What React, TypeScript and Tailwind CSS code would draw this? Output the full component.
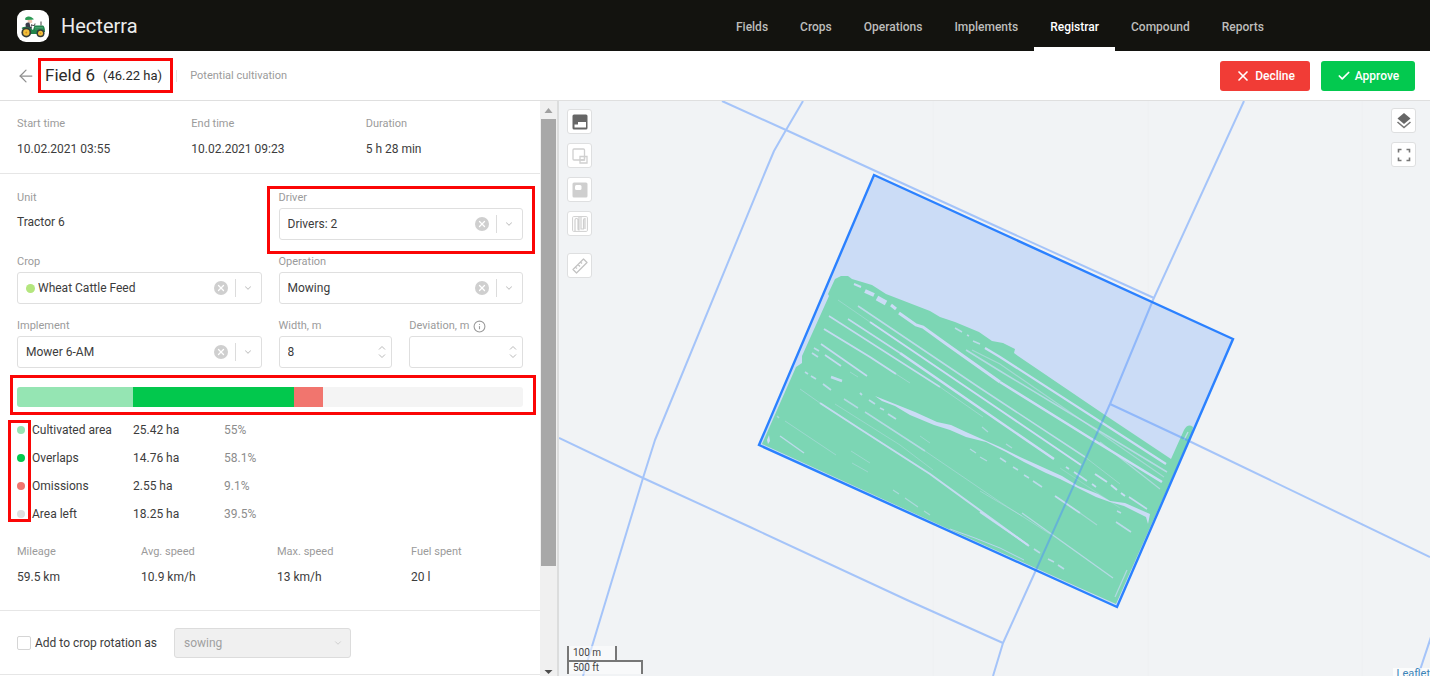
import React from 'react';
import { ArrowLeft, Check, ChevronDown, Info, X } from 'lucide-react';
import clsx from 'clsx';

const navItems = ['Fields', 'Crops', 'Operations', 'Implements', 'Registrar', 'Compound', 'Reports'];

const times = [
  { label: 'Start time', value: '10.02.2021 03:55' },
  { label: 'End time', value: '10.02.2021 09:23' },
  { label: 'Duration', value: '5 h 28 min' },
];

const areas = [
  { label: 'Cultivated area', value: '25.42 ha', percent: '55%', dot: 'bg-[#95e5b3]', bar: 23 },
  { label: 'Overlaps', value: '14.76 ha', percent: '58.1%', dot: 'bg-[#02c84d]', bar: 31.8 },
  { label: 'Omissions', value: '2.55 ha', percent: '9.1%', dot: 'bg-[#f1756e]', bar: 5.7 },
  { label: 'Area left', value: '18.25 ha', percent: '39.5%', dot: 'bg-[#dedede]', bar: 0 },
];

const stats = [
  { label: 'Mileage', value: '59.5 km' },
  { label: 'Avg. speed', value: '10.9 km/h' },
  { label: 'Max. speed', value: '13 km/h' },
  { label: 'Fuel spent', value: '20 l' },
];

// Neighbouring field borders, in map canvas units
const borders = [
  'M722 101 L786 130 L1000 228 L1154 298',
  'M803 101 L786 130 L774 151 L766 170 L655 440 L643 478 L583 676',
  'M1244 101 L1153 300 L1110 404 L1036 570 L1003 643 L993 676',
  'M1110 404 L1189 441 L1430 557',
  'M559 438 L643 478 L750 527 L907 600 L1003 643',
  'M1432 634 L1418 676',
];

// Strips the mower has missed: [path, width, opacity]
const gaps: [string, number, number][] = [
  ['M854 284 L861 287', 2, 1],
  ['M865 291 L874 295', 4, 1],
  ['M877 298 L886 303', 5, 1],
  ['M891 305 L896 309', 3, 1],
  ['M899 313 L916 325 L923 327 L945 343 L1000 382', 3, 1],
  ['M1000 382 L1090 438 L1162 482', 2.6, 1],
  ['M955 328 L962 332 M967 335 L969 336 M973 341 L980 344', 1.6, 0.8],
  ['M985 348 L1000 357 L1166 464', 2.2, 1],
  ['M966 350 L1000 371 L1167 472', 1.6, 0.7],
  ['M972 350 L1000 364 L1164 477', 1.2, 0.5],
  ['M858 306 L980 388 L1085 457', 1.6, 0.8],
  ['M1085 457 L1120 484', 1, 0.4],
  ['M838 300 L870 322', 1, 0.35],
  ['M870 322 L1000 410 L1081 465', 2, 1],
  ['M848 319 L900 353', 1.6, 0.9],
  ['M900 353 L1000 422 L1054 459', 2.4, 1],
  ['M829 316 L893 357 L940 387', 1.6, 0.9],
  ['M940 387 L983 417', 1, 0.4],
  ['M824 329 L870 357 L896 374', 2, 0.9],
  ['M896 374 L910 383', 1, 0.4],
  ['M821 344 L867 376', 1.8, 0.9],
  ['M814 348 L819 351 M812 353 L818 357', 1.8, 0.8],
  ['M825 355 L841 366', 1.8, 0.9],
  ['M850 372 L858 377', 1, 0.4],
  ['M831 377 L842 381', 2.4, 0.9],
  ['M805 372 L808 374 M811 376 L816 379 M823 384 L831 390', 1.8, 0.8],
  ['M844 399 L858 408 M865 412 L925 451', 1.5, 0.7],
  ['M860 393 L862 395 M869 400 L875 404 M880 408 L884 410 M888 414 L896 419', 1.8, 0.8],
  ['M800 389 L820 403', 1, 0.4],
  ['M820 403 L860 429 L930 474 L1029 546', 2, 0.9],
  ['M835 404 L900 445 L933 470', 1, 0.35],
  ['M925 451 L1000 502 L1050 534', 1, 0.4],
  ['M785 421 L836 455', 1, 0.4],
  ['M780 436 L804 453', 1.5, 0.8],
  ['M777 416 L779 418', 1.6, 0.6],
  ['M851 451 L870 463 M852 463 L868 472', 1, 0.4],
  ['M893 490 L899 494 M905 498 L918 507 M924 511 L930 515', 1.2, 0.6],
  ['M920 436 L930 443', 1, 0.4],
  ['M970 449 L976 453 M980 457 L987 461', 1.4, 0.7],
  ['M982 427 L988 432 M1006 444 L1012 448', 1.4, 0.6],
  ['M1000 458 L1006 462 M1013 467 L1018 470 M1024 475 L1029 478 M1033 481 L1042 487', 1.6, 0.8],
  ['M980 491 L1022 516', 1, 0.4],
  ['M1022 513 L1113 578', 1.4, 0.7],
  ['M1055 496 L1080 513', 1.8, 0.9],
  ['M1080 513 L1097 525', 1.2, 0.5],
  ['M980 512 L1028 545', 2, 0.9],
  ['M1034 549 L1040 553 M1048 559 L1054 562 M1058 565 L1064 569', 1.8, 0.8],
  ['M1066 467 L1069 469 M1074 472 L1087 481 M1092 484 L1096 487', 1.8, 0.9],
  ['M1095 474 L1107 482 M1111 485 L1117 490 M1121 493 L1125 496', 2, 0.95],
  ['M1129 497 L1147 509', 1.6, 0.9],
  ['M1060 468 L1120 508', 1, 0.3],
  ['M1100 442 L1160 489', 1.2, 0.6],
  ['M1117 511 L1121 513 M1116 522 L1131 532', 1.6, 0.8],
  ['M1188 432 L1184 440', 1.4, 0.8],
  ['M1127 570 L1115 597', 1.2, 0.7],
];

const Label: React.FC<{ children: React.ReactNode; htmlFor?: string }> = ({ children, htmlFor }) => (
  <label htmlFor={htmlFor} className="block text-[11px] leading-4 text-[#9b9b9b]">{children}</label>
);

const SelectField: React.FC<{ id: string; label: string; value: string; dot?: boolean }> = ({ id, label, value, dot }) => (
  <div>
    <Label htmlFor={id}>{label}</Label>
    <div className="relative mt-0.5 flex h-8 items-center rounded-[3px] border border-[#dfdfdf] bg-white">
      {dot && <span className="absolute left-2 size-[9px] rounded-full bg-[#b4e67e]" />}
      <select id={id} className={clsx('h-full w-full appearance-none bg-transparent pr-16 outline-none', dot ? 'pl-5' : 'pl-2')}>
        <option>{value}</option>
      </select>
      <button aria-label={`Clear ${label}`} className="absolute right-[33px] flex size-3.5 items-center justify-center rounded-full bg-[#cfcfcf]">
        <X className="size-2.5 text-white" strokeWidth={3} />
      </button>
      <span className="absolute right-[25px] h-[18px] w-px bg-[#dcdcdc]" />
      <ChevronDown className="pointer-events-none absolute right-2 size-2.5 text-[#c4c4c4]" strokeWidth={2.5} />
    </div>
  </div>
);

const NumberField: React.FC<{ id: string; label: string; value?: string; info?: boolean }> = ({ id, label, value, info }) => (
  <div>
    <div className="flex items-center gap-1">
      <Label htmlFor={id}>{label}</Label>
      {info && <Info className="size-[13px] text-[#9b9b9b]" strokeWidth={2} />}
    </div>
    <div className="relative mt-0.5 flex h-8 items-center rounded-[3px] border border-[#dfdfdf] bg-white">
      <input id={id} type="text" inputMode="numeric" defaultValue={value} className="h-full w-full bg-transparent pr-6 pl-2 outline-none" />
      <svg viewBox="0 0 8 14" className="pointer-events-none absolute right-[5px] h-3.5 w-2" fill="none" stroke="#b9b9b9">
        <path d="M1 4.5 L4 1.5 L7 4.5 M1 9.5 L4 12.5 L7 9.5" />
      </svg>
    </div>
  </div>
);

const Logo = () => (
  <svg viewBox="0 0 32 32" className="size-8 rounded-[9px] bg-white" aria-hidden="true">
    <path d="M8 9.5 Q8 7 11 6.5 Q14 6 15.5 8 L17 9.3 L15 9.8 L9 10 Z" fill="#2d9a55" />
    <path d="M10.5 10 L15 10 L15.3 12.5 L13 13.5 L11 12.5 Z" fill="#f0c5b0" />
    <path d="M8.5 14 Q10 12 12.5 12.8 L15 15 L14.5 20 L9 20 Z" fill="#393b48" />
    <path d="M12.5 13 L14 13.2 L14.5 17 L13.5 17 Z" fill="#fff" />
    <path d="M14 15 L17.5 15.6 L18 13.5" stroke="#474747" fill="none" />
    <path d="M4.5 18 Q8 15.5 13 18 L16 20 L17.5 15.5 L26 15.5 Q28 16.5 28 22 L20 24 L11 24 Z" fill="#23844c" />
    <path d="M18 17.5 H26 M18 19 H26" stroke="#5fb57f" strokeWidth="0.6" />
    <path d="M24 11.5 V15.5" stroke="#454545" />
    <circle cx="9.3" cy="22.5" r="4.9" fill="#343b38" />
    <circle cx="9.3" cy="22.5" r="3.2" fill="#f3bf3b" />
    <circle cx="9.3" cy="22.5" r="0.9" fill="#cf8d20" />
    <circle cx="23.5" cy="23.2" r="4" fill="#343b38" />
    <circle cx="23.5" cy="23.2" r="2.5" fill="#f3bf3b" />
    <circle cx="23.5" cy="23.2" r="0.8" fill="#cf8d20" />
  </svg>
);

const MapButton: React.FC<{ label: string; className?: string; children: React.ReactNode }> = ({ label, className, children }) => (
  <button aria-label={label} className={clsx('flex size-[25px] items-center justify-center rounded-[3px] border border-[#dedfe0] bg-white', className)}>
    <svg viewBox="0 0 16 16" className="size-4" fill="none">{children}</svg>
  </button>
);

const FieldMap = () => (
  <svg viewBox="559 101 871 575" preserveAspectRatio="xMinYMin slice" className="absolute inset-0 size-full" fill="none">
    <path d="M933 101 V676 M1148 101 V676 M1362 101 V676" stroke="#eef0f2" />
    <path d="M874 175 L1233 339 L1117 607 L759 445 Z" fill="#cbdcf6" />
    <path
      d="M835 279 L841 276 L848 276 L852 279 L872 285 L886 294 L930 311 L940 317 L955 322 L979 332 L992 341 L1003 343 L1015 349 L1014 353 L1018 356 L1105 415 L1171 459 L1184 430 Q1188 423 1193 427 L1192 433 L1116 604 L1080 588 L955 532 L762 444 L796 367 L802 363 L802 356 L829 296 L828 294 Z"
      fill="#7cd6b4"
    />
    <g stroke="#cbdcf6">
      {gaps.map(([d, width, opacity]) => (
        <path key={d} d={d} strokeWidth={width} opacity={opacity} />
      ))}
    </g>
    {/* Wide gap left between the two passes */}
    <path
      d="M875 396 L900 406 L915 412 L937 422 L951 425 L966 432 L984 440 L1000 447 L1020 457 L1040 466 L1062 476 L1078 486 L1098 494 L1110 501 L1125 503 L1150 514 L1148 524 L1146 517 L1124 506 L1110 502 L1096 497 L1074 486 L1060 479 L1046 473 L1024 462 L1006 452 L986 442 L966 437 L950 430 L934 425 L910 415 L895 406 L882 401 Z"
      fill="#cbdcf6"
    />
    <path d="M769 435 L770 441 L768 444 L767 440 Z" fill="#cbdcf6" />
    <path d="M950 529 L975 538 L1000 548 L1024 560" stroke="#b7d5ef" />
    <g stroke="#4a8dff" strokeWidth="2" opacity="0.45" strokeLinejoin="round">
      {borders.map((d) => (
        <path key={d} d={d} />
      ))}
    </g>
    <path d="M874 175 L1233 339 L1117 607 L759 445 Z" stroke="#2b81ff" strokeWidth="2.4" />
  </svg>
);

export default function App() {
  return (
    <div className="flex h-screen flex-col overflow-hidden bg-white font-['Roboto',sans-serif] text-xs text-[#3c3c3c]">
      <header className="flex h-[51px] shrink-0 items-center justify-between bg-[#13130f] pr-[150px] pl-[17px]">
        <div className="flex items-center gap-3">
          <Logo />
          <span className="text-xl text-[#ececec]">Hecterra</span>
        </div>
        <nav className="flex h-full">
          {navItems.map((item) => (
            <a
              key={item}
              href="#"
              className={clsx(
                'flex items-center border-b-4 px-4 pt-1.5 font-medium',
                item === 'Registrar' ? 'border-white text-white' : 'border-transparent text-[#bdbdbb]',
              )}
            >
              {item}
            </a>
          ))}
        </nav>
      </header>

      <div className="flex h-[50px] shrink-0 items-center border-b border-[#dfdfdf] pr-[15px] pl-4">
        <a href="#" aria-label="Back" className="text-[#8f8f8f]">
          <ArrowLeft className="size-5" strokeWidth={1.5} />
        </a>
        <h1 className="ml-0.5 flex h-[35px] items-center gap-2 border-[3px] border-[#fb0606] pr-2 pl-1 text-[17px] text-[#2a2a2a]">
          Field 6 <span className="text-[13px]">(46.22 ha)</span>
        </h1>
        <span className="ml-[3px] h-3 w-px bg-[#e3e3e3]" />
        <span className="ml-[13px] text-[11px] leading-4 text-[#9b9b9b]">Potential cultivation</span>
        <div className="ml-auto flex gap-[11px]">
          <button className="flex h-[30px] w-[90px] items-center justify-center gap-1 rounded-[3px] bg-[#f13c36] font-medium text-white">
            <X className="size-4" strokeWidth={2.5} /> Decline
          </button>
          <button className="flex h-[30px] w-[94px] items-center justify-center gap-1 rounded-[3px] bg-[#03c94f] font-medium text-white">
            <Check className="size-3.5" strokeWidth={3} /> Approve
          </button>
        </div>
      </div>

      <main className="flex min-h-0 flex-1">
        <section className="w-[540px] shrink-0 overflow-hidden">
          <div className="grid grid-cols-3 border-b border-[#e6e6e6] py-[15px] pl-[17px]">
            {times.map(({ label, value }) => (
              <div key={label}>
                <div className="text-[11px] leading-4 text-[#9b9b9b]">{label}</div>
                <div className="mt-2 leading-[18px]">{value}</div>
              </div>
            ))}
          </div>

          <div className="border-b border-[#e6e6e6] px-[17px] pt-4 pb-6">
            <div className="grid grid-cols-2 gap-x-[17px] gap-y-[14px]">
              <div>
                <div className="text-[11px] leading-4 text-[#9b9b9b]">Unit</div>
                <div className="leading-8">Tractor 6</div>
              </div>
              <div className="relative">
                <SelectField id="driver" label="Driver" value="Drivers: 2" />
                <div className="pointer-events-none absolute -inset-x-3 -top-1 -bottom-3.5 border-[3px] border-[#fb0606]" />
              </div>
              <SelectField id="crop" label="Crop" value="Wheat Cattle Feed" dot />
              <SelectField id="operation" label="Operation" value="Mowing" />
              <SelectField id="implement" label="Implement" value="Mower 6-AM" />
              <div className="grid grid-cols-2 gap-[17px]">
                <NumberField id="width" label="Width, m" value="8" />
                <NumberField id="deviation" label="Deviation, m" info />
              </div>
            </div>

            <div className="relative mt-[19px]">
              <div className="flex h-5 overflow-hidden rounded-[3px] bg-[#f4f4f4]">
                {areas.map(({ label, dot, bar }) => (
                  <div key={label} className={dot} style={{ width: `${bar}%` }} />
                ))}
              </div>
              <div className="pointer-events-none absolute -top-3 -right-[13px] -bottom-2 -left-[7px] border-[3px] border-[#fb0606]" />
            </div>

            <div className="relative mt-[9px]">
              <table className="border-collapse">
                <tbody>
                  {areas.map(({ label, value, percent, dot }) => (
                    <tr key={label} className="h-7">
                      <th scope="row" className="w-[116px] p-0 text-left font-normal">
                        <span className="flex items-center gap-[7px]">
                          <span className={clsx('size-2 rounded-full', dot)} />
                          {label}
                        </span>
                      </th>
                      <td className="w-[91px] p-0">{value}</td>
                      <td className="p-0 text-[#8c8c8c]">{percent}</td>
                    </tr>
                  ))}
                </tbody>
              </table>
              <div className="pointer-events-none absolute top-1 bottom-1.5 -left-[9px] w-[23px] border-[3px] border-[#fb0606]" />
            </div>

            <div className="mt-4 grid grid-cols-[124px_136px_134px_1fr]">
              {stats.map(({ label, value }) => (
                <div key={label}>
                  <div className="text-[11px] leading-4 text-[#9b9b9b]">{label}</div>
                  <div className="mt-2 leading-[18px]">{value}</div>
                </div>
              ))}
            </div>
          </div>

          <div className="flex items-center border-b border-[#e6e6e6] px-[17px] pt-[17px] pb-4">
            <label className="flex w-[157px] items-center gap-1">
              <input type="checkbox" className="size-3.5 appearance-none rounded-[2px] border border-[#d5d5d5] bg-white" />
              Add to crop rotation as
            </label>
            <div className="relative flex h-[30px] w-[177px] items-center">
              <select disabled aria-label="Crop rotation role" className="size-full appearance-none rounded-[3px] border border-[#dcdcdc] bg-[#f0f0f0] pl-[9px] text-[#a0a0a0]">
                <option>sowing</option>
              </select>
              <ChevronDown className="pointer-events-none absolute right-2 size-2.5 text-[#c8c8c8]" strokeWidth={2} />
            </div>
          </div>
        </section>

        <div className="flex w-[19px] shrink-0 flex-col border-r-2 border-[#dcdddd] bg-[#f0f0f0] px-px" aria-hidden="true">
          <svg viewBox="0 0 15 18" className="h-[18px] w-[15px] shrink-0"><path d="M3.5 12 L7.5 7 L11.5 12 Z" fill="#a0a0a0" /></svg>
          <div className="flex-1">
            <div className="h-[83%] w-[15px] bg-[#a8a8a8]" />
          </div>
          <svg viewBox="0 0 15 18" className="h-[18px] w-[15px] shrink-0"><path d="M3.5 12 L7.5 16 L11.5 12 Z" fill="#4d4d4d" /></svg>
        </div>

        <section className="relative min-w-0 flex-1 overflow-hidden bg-[#f1f3f5]">
          <FieldMap />

          <div className="absolute top-2 left-2 flex flex-col gap-[9px]">
            <MapButton label="Cultivated area">
              <rect x="0.5" y="0.5" width="15" height="15" rx="1.5" fill="#666" />
              <path d="M2.5 10.5 H6 V8 H14 V13.5 H2.5 Z" fill="#fff" />
            </MapButton>
            <MapButton label="Overlaps">
              <rect x="1" y="1" width="11.5" height="11" rx="1" stroke="#d0d0d0" strokeWidth="1.3" />
              <path d="M8 8.5 H15 V15 H8 Z M8 8.5 H12.5 V12 H8 Z" stroke="#d0d0d0" strokeWidth="1.3" />
            </MapButton>
            <MapButton label="Omissions">
              <rect x="0.5" y="0.5" width="15" height="15" rx="1.5" fill="#cfcfcf" />
              <rect x="3" y="3" width="6.5" height="5" rx="1.5" fill="#fff" />
            </MapButton>
            <MapButton label="Tracks">
              <rect x="0.6" y="0.6" width="14.8" height="14.8" rx="1" stroke="#cfcfcf" />
              <path d="M3 15 V4 Q3 2.5 4.5 2.5 Q6 2.5 6 4 V13 Q6 14 7 14 V1 M9 1 V13 H11.5 V4 Q11.5 2.5 13 2.5 V13" stroke="#cfcfcf" strokeWidth="1.2" />
            </MapButton>
            <MapButton label="Ruler" className="mt-2">
              <path d="M1 11.5 L11.5 1 L15 4.500 L4.500 15 Z M3.500 9 L5 10.500 M6 6.500 L8 8.500 M8.500 4 L10 5.500" stroke="#c3c3c3" strokeWidth="1.3" strokeLinejoin="round" />
            </MapButton>
          </div>

          <div className="absolute top-[7px] right-[14px] flex flex-col gap-[9px]">
            <MapButton label="Layers">
              <path d="M8 0 L14.500 5.500 L8 11 L1.500 5.500 Z" fill="#666" />
              <path d="M1.500 9 L8 14.500 L14.500 9" stroke="#777" strokeWidth="1.6" />
            </MapButton>
            <MapButton label="Full screen">
              <path d="M5.500 2.500 H2.500 V5.500 M10.500 2.500 H13.500 V5.500 M5.500 13.500 H2.500 V10.500 M10.500 13.500 H13.500 V10.500" stroke="#777" strokeWidth="1.6" />
            </MapButton>
          </div>

          <div className="absolute bottom-0.5 left-2 text-[10px] leading-[14px] text-[#444]">
            <div className="h-3.5 w-[50px] border-x-2 border-[#777] bg-white/50 pl-1">100 m</div>
            <div className="h-3.5 w-[76px] border-2 border-b-0 border-[#777] bg-white/50 pl-1 leading-3">500 ft</div>
          </div>
          <a href="#" className="absolute -right-1 -bottom-1 bg-white/70 px-1 text-[11px] leading-3 text-[#3c84b8]">Leaflet</a>
        </section>
      </main>
    </div>
  );
}
